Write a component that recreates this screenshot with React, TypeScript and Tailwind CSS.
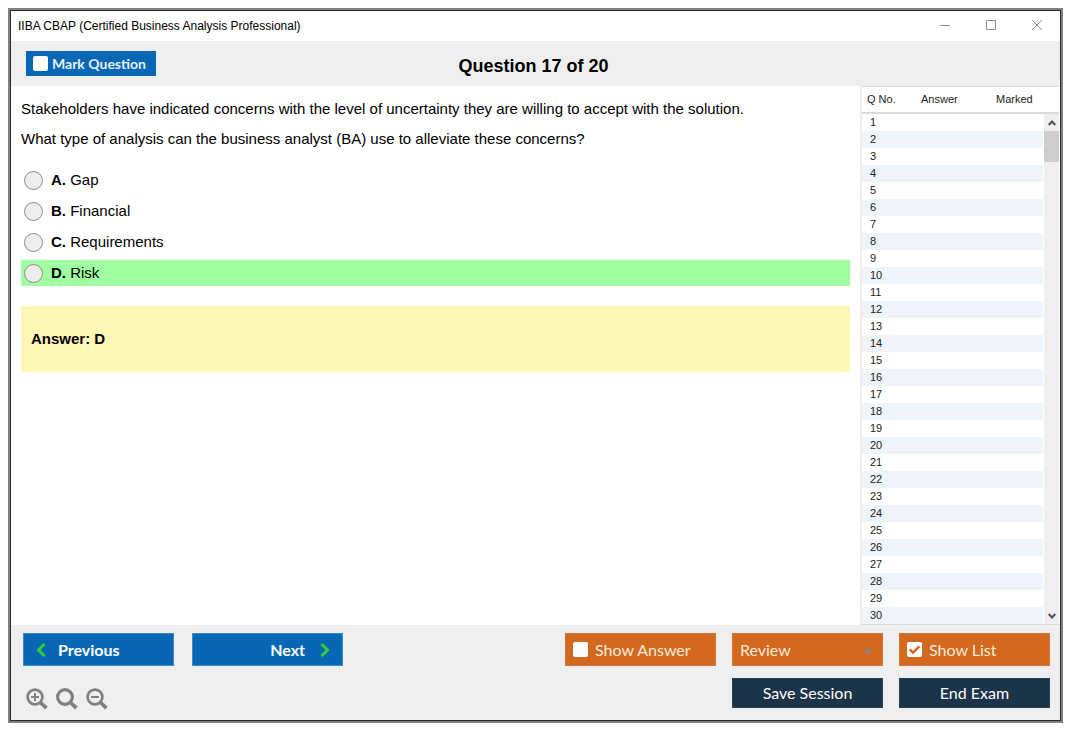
import { useState } from "react";

const options = [
  { letter: "A", text: "Gap" },
  { letter: "B", text: "Financial" },
  { letter: "C", text: "Requirements" },
  { letter: "D", text: "Risk" },
];
const correct = "D";
const rows = Array.from({ length: 30 }, (_, i) => i + 1);

const footerButton = "h-[33px] w-[151px] flex items-center";
const blueButton = "bg-[#0867b5] border border-[#3f8ac6] text-white font-bold";
const orangeButton = "bg-[#d2691e] border border-[#d67634] text-[#fbe9dc]";
const navyButton = "h-[30px] w-[151px] bg-[#1b344a] border border-[#2b4256] text-white";

function CheckBox({ id, checked, onChange }: { id: string; checked: boolean; onChange: (v: boolean) => void }) {
  return (
    <span className="grid">
      <input
        id={id}
        type="checkbox"
        checked={checked}
        onChange={(e) => onChange(e.target.checked)}
        className="col-start-1 row-start-1 size-[15px] appearance-none rounded-xs bg-white"
      />
      {checked && (
        <svg viewBox="0 0 15 15" className="pointer-events-none col-start-1 row-start-1 size-[15px]" fill="none" stroke="#d2691e" strokeWidth="2.4">
          <path d="M2.8 7.4 6 10.6 12.4 4.4" />
        </svg>
      )}
    </span>
  );
}

function Magnifier({ sign }: { sign?: "plus" | "minus" }) {
  return (
    <svg viewBox="0 0 22 22" className="size-[22px]" fill="none" stroke="#808080">
      <circle cx="9" cy="9" r="7.4" strokeWidth={sign ? 2.6 : 3.2} />
      <path d="M14 14 20.4 20.2" strokeWidth="3.8" />
      {sign && <path d="M5 9H13" strokeWidth="2" />}
      {sign === "plus" && <path d="M9 5V13" strokeWidth="2" />}
    </svg>
  );
}

export default function App() {
  const [marked, setMarked] = useState(false);
  const [showAnswer, setShowAnswer] = useState(false);
  const [showList, setShowList] = useState(true);

  return (
    <div className="flex min-h-screen bg-white pt-2 pr-3 pb-3 pl-2 font-['Liberation_Sans',Arial,sans-serif] text-black">
      <div className="flex flex-1 flex-col border-2 border-[#808080]">
        <div className="flex flex-1 flex-col border border-[#2b2b2b]">
          <header className="flex h-[30px] items-center justify-between pr-[17px] pl-[7px]">
            <h1 className="text-xs">IIBA CBAP (Certified Business Analysis Professional)</h1>
            <div className="flex items-center gap-[34px] text-[#8a8a8a]">
              <button aria-label="Minimize">
                <svg viewBox="0 0 12 12" className="size-3" stroke="currentColor"><path d="M1 5.500H11" /></svg>
              </button>
              <button aria-label="Maximize">
                <svg viewBox="0 0 12 12" className="size-3" fill="none" stroke="currentColor"><path d="M1.500 0.500H10.500V9.500H1.500Z" /></svg>
              </button>
              <button aria-label="Close">
                <svg viewBox="0 0 12 12" className="size-3" stroke="currentColor"><path d="M1 0 11 10M11 0 1 10" /></svg>
              </button>
            </div>
          </header>

          <div className="grid h-[45px] grid-cols-[1fr_auto_1fr] items-center bg-[#efefef] pr-[19px] pl-[15px]">
            <label htmlFor="mark" className="flex h-[25px] w-[130px] items-center gap-1 bg-[#0867b5] pl-[7px] font-[Lato,'Open_Sans',sans-serif] text-sm font-bold text-[#e6f0f8]">
              <CheckBox id="mark" checked={marked} onChange={setMarked} />
              Mark Question
            </label>
            <h2 className="pt-1 text-lg font-bold">Question 17 of 20</h2>
          </div>

          <div className="flex flex-1">
            <main className="flex-1 px-[10px] pt-2 text-[15px]">
              <p className="leading-[30px]">
                Stakeholders have indicated concerns with the level of uncertainty they are willing to accept with the solution.
              </p>
              <p className="leading-[30px]">
                What type of analysis can the business analyst (BA) use to alleviate these concerns?
              </p>
              <div className="mt-[13px] flex flex-col gap-[5px]">
                {options.map((o) => (
                  <label
                    key={o.letter}
                    htmlFor={`option-${o.letter}`}
                    className={o.letter === correct ? "flex h-[26px] items-center gap-2 bg-[#a0ffa0] pl-[3px]" : "flex h-[26px] items-center gap-2 pl-[3px]"}
                  >
                    <input
                      id={`option-${o.letter}`}
                      type="radio"
                      name="answer"
                      className="size-[19px] appearance-none rounded-full border border-[#8c8c8c] bg-[#ededed] checked:border-4"
                    />
                    <span><b>{o.letter}.</b> {o.text}</span>
                  </label>
                ))}
              </div>
              <div className="mt-5 flex h-[66px] items-center bg-[#fff8b8] px-[10px] font-bold">Answer: D</div>
            </main>

            {showList && (
              <aside className="w-[200px] border-b border-l-2 border-b-[#dcdcdc] border-l-[#efefef] pr-px">
                <table className="w-full table-fixed border-separate border-spacing-0 text-left text-[11px] leading-[17px] text-[#222222]">
                  <thead>
                    <tr className="h-7">
                      <th className="w-[54px] border-t border-b-2 border-[#dcdcdc] p-0 pl-[5px] font-normal">Q No.</th>
                      <th className="w-[75px] border-t border-b-2 border-[#dcdcdc] p-0 pl-[5px] font-normal">Answer</th>
                      <th className="border-t border-b-2 border-[#dcdcdc] p-0 pl-[5px] font-normal">Marked</th>
                      <th className="w-4 border-t border-b-2 border-[#dcdcdc] p-0" aria-hidden="true" />
                    </tr>
                  </thead>
                  <tbody>
                    {rows.map((n) => (
                      <tr key={n} className="h-[17px]">
                        <td className={n % 2 ? "p-0 pl-2" : "bg-[#eef4f9] p-0 pl-2"}>{n}</td>
                        <td className={n % 2 ? "p-0" : "bg-[#eef4f9] p-0"} />
                        <td className={n % 2 ? "p-0" : "bg-[#eef4f9] p-0"} />
                        {n === 1 && (
                          <td rowSpan={30} className="border-l border-white bg-[#efefef] p-0 align-top">
                            <div className="flex h-[510px] flex-col items-center">
                              <button aria-label="Scroll up" className="flex h-[17px] items-center">
                                <svg viewBox="0 0 8 6" className="h-[6px] w-2" fill="none" stroke="#505050" strokeWidth="2"><path d="M0.700 5 4 1.500 7.300 5" /></svg>
                              </button>
                              <div className="h-[31px] w-full bg-[#cdcdcd]" />
                              <button aria-label="Scroll down" className="mt-auto flex h-[17px] items-center">
                                <svg viewBox="0 0 8 6" className="h-[6px] w-2" fill="none" stroke="#505050" strokeWidth="2"><path d="M0.700 1 4 4.500 7.300 1" /></svg>
                              </button>
                            </div>
                          </td>
                        )}
                      </tr>
                    ))}
                  </tbody>
                </table>
              </aside>
            )}
          </div>

          <footer className="flex items-start justify-between bg-[#efefef] pt-2 pr-[10px] pb-[10px] pl-3 font-[Lato,'Open_Sans',sans-serif] text-base">
            <div>
              <div className="flex gap-[18px]">
                <button className={`${footerButton} ${blueButton} gap-3 pl-3`}>
                  <svg viewBox="0 0 10 14" className="h-[14px] w-[10px]" fill="none" stroke="#32cd32" strokeWidth="3"><path d="M8.500 1 2.500 7 8.500 13" /></svg>
                  Previous
                </button>
                <button className={`${footerButton} ${blueButton} justify-end gap-[15px] pr-3`}>
                  Next
                  <svg viewBox="0 0 10 14" className="h-[14px] w-[10px]" fill="none" stroke="#32cd32" strokeWidth="3"><path d="M1.500 1 7.500 7 1.500 13" /></svg>
                </button>
              </div>
              <div className="flex gap-2 pt-[22px] pl-[3px]">
                <button aria-label="Zoom in" className="flex"><Magnifier sign="plus" /></button>
                <button aria-label="Reset zoom" className="flex"><Magnifier /></button>
                <button aria-label="Zoom out" className="flex"><Magnifier sign="minus" /></button>
              </div>
            </div>
            <div className="grid grid-cols-3 gap-x-4 gap-y-3">
              <label htmlFor="show-answer" className={`${footerButton} ${orangeButton} gap-[7px] pl-[7px]`}>
                <CheckBox id="show-answer" checked={showAnswer} onChange={setShowAnswer} />
                Show Answer
              </label>
              <div className={`${footerButton} ${orangeButton} pr-[9px]`}>
                <select aria-label="Review" className="h-full flex-1 appearance-none bg-transparent pl-[7px]">
                  <option>Review</option>
                </select>
                <svg viewBox="0 0 10 6" className="h-[6px] w-[10px]"><path d="M5 0 10 6H0Z" fill="#8b8378" /></svg>
              </div>
              <label htmlFor="show-list" className={`${footerButton} ${orangeButton} gap-[7px] pl-[7px]`}>
                <CheckBox id="show-list" checked={showList} onChange={setShowList} />
                Show List
              </label>
              <button className={`${navyButton} col-start-2`}>Save Session</button>
              <button className={navyButton}>End Exam</button>
            </div>
          </footer>
        </div>
      </div>
    </div>
  );
}
